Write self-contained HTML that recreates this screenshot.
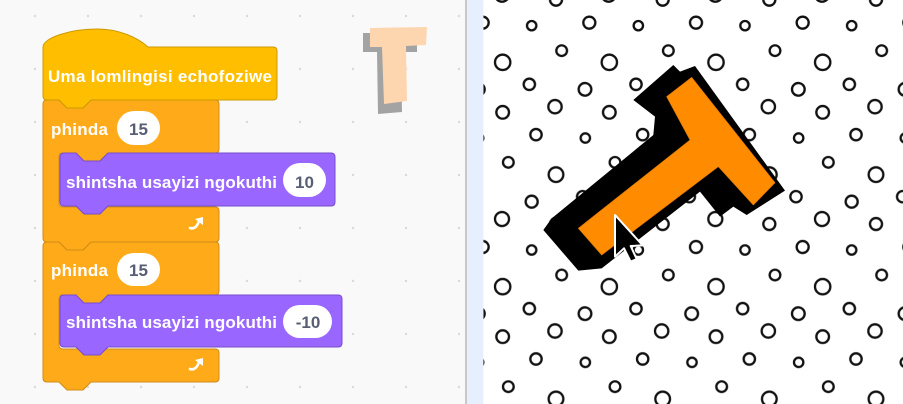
<!DOCTYPE html>
<html><head><meta charset="utf-8"><style>
html,body{margin:0;padding:0;width:903px;height:404px;overflow:hidden;background:#f9f9f9}
svg{position:absolute;left:0;top:0}
</style></head><body>
<svg width="903" height="404" viewBox="0 0 903 404" xmlns="http://www.w3.org/2000/svg">
<defs>
<pattern id="dots" x="0" y="0" width="53" height="53" patternUnits="userSpaceOnUse">
<circle cx="35" cy="16" r="1.2" fill="#d9d9d9"/>
</pattern>
</defs>
<rect x="0" y="0" width="466" height="404" fill="#f9f9f9"/>
<rect x="0" y="0" width="466" height="404" fill="url(#dots)"/>
<rect x="465" y="0" width="2" height="404" fill="#c8c8c8"/>
<rect x="467" y="0" width="16" height="404" fill="#e5effe"/>
<rect x="482" y="0" width="1" height="404" fill="#c9d6ea"/>

<!-- peach T sprite icon -->
<path d="M363,33 L417,33 L417,52 L401,52 L402,112 L378,114 L377,52 L363,52 Z" fill="#a3a3a3"/>
<path d="M370,28 L427,27 L426,45 L406,46 L407,101 L384,104 L382,47 L370,47 Z" fill="#fdd6b0"/>

<g font-family="Liberation Sans, Arial, sans-serif" font-weight="bold" font-size="17">
<!-- repeat 2 -->
<path d="M43,246 Q43,242 47,242 L59,242 L67,250 L83,250 L91,242 L215,242 Q219,242 219,246 L219,291 Q219,295 215,295 L108,295 L100,303 L84,303 L76,295 L63,295 Q59,295 59,299 L59,345 Q59,349 63,349 L215,349 Q219,349 219,353 L219,378 Q219,382 215,382 L91,382 L83,390 L67,390 L59,382 L47,382 Q43,382 43,378 Z" fill="#ffab19" stroke="#cf8b17" stroke-width="1"/>
<path d="M60,299 Q60,295 64,295 L76,295 L84,303 L100,303 L108,295 L338,295 Q342,295 342,299 L342,343 Q342,347 338,347 L108,347 L100,355 L84,355 L76,347 L64,347 Q60,347 60,343 Z" fill="#9966ff" stroke="#774dcb" stroke-width="1"/>
<text x="51" y="276" fill="#fff" textLength="57">phinda</text>
<rect x="117" y="253" width="43" height="33" rx="16.5" fill="#fff"/>
<text x="138.5" y="276" fill="#575e75" text-anchor="middle">15</text>
<text x="66" y="328" fill="#fff" textLength="211">shintsha usayizi ngokuthi</text>
<rect x="283" y="305" width="49" height="33" rx="16.5" fill="#fff"/>
<text x="308" y="328" fill="#575e75" text-anchor="middle">-10</text>
<path d="M190,369 Q196,371 199,362" fill="none" stroke="#fff" stroke-width="2.6" stroke-linecap="round"/>
<path d="M195,360 L203,358 L203,366 Z" fill="#fff"/>

<!-- repeat 1 -->
<path d="M43,104 Q43,100 47,100 L59,100 L67,108 L83,108 L91,100 L215,100 Q219,100 219,104 L219,149 Q219,153 215,153 L108,153 L100,161 L84,161 L76,153 L63,153 Q59,153 59,157 L59,203 Q59,207 63,207 L215,207 Q219,207 219,211 L219,238 Q219,242 215,242 L91,242 L83,250 L67,250 L59,242 L47,242 Q43,242 43,238 Z" fill="#ffab19" stroke="#cf8b17" stroke-width="1"/>
<path d="M60,157 Q60,153 64,153 L76,153 L84,161 L100,161 L108,153 L331,153 Q335,153 335,157 L335,202 Q335,206 331,206 L108,206 L100,214 L84,214 L76,206 L64,206 Q60,206 60,202 Z" fill="#9966ff" stroke="#774dcb" stroke-width="1"/>
<text x="51" y="135" fill="#fff" textLength="57">phinda</text>
<rect x="117" y="111" width="43" height="34" rx="17" fill="#fff"/>
<text x="138.5" y="135" fill="#575e75" text-anchor="middle">15</text>
<text x="66" y="188" fill="#fff" textLength="211">shintsha usayizi ngokuthi</text>
<rect x="283" y="163" width="43" height="34" rx="17" fill="#fff"/>
<text x="304.5" y="188" fill="#575e75" text-anchor="middle">10</text>
<path d="M190,228 Q196,230 199,221" fill="none" stroke="#fff" stroke-width="2.6" stroke-linecap="round"/>
<path d="M195,219 L203,217 L203,225 Z" fill="#fff"/>

<!-- hat -->
<path d="M43,47 C43,38 70,29 97,29 C120,29 138,38 148,47 L273,47 Q277,47 277,51 L277,96 Q277,100 273,100 L91,100 L83,108 L67,108 L59,100 L47,100 Q43,100 43,96 Z" fill="#ffbf00" stroke="#cc9900" stroke-width="1"/>
<text x="48" y="82" fill="#fff" textLength="224">Uma lomlingisi echofoziwe</text>
</g>
</svg>

<svg style="left:480px" width="423" height="404" viewBox="0 0 1269 1212" xmlns="http://www.w3.org/2000/svg">
<defs>
<pattern id="circ" x="0" y="0" width="320" height="673" patternUnits="userSpaceOnUse">
<g fill="none" stroke="#111" stroke-width="7">
<circle cx="68" cy="187" r="23"/>
<circle cx="245" cy="152" r="16"/>
<circle cx="148" cy="253" r="17"/>
<circle cx="315" cy="268" r="19"/><circle cx="-5" cy="268" r="19"/>
<circle cx="68" cy="337" r="19"/>
<circle cx="225" cy="320" r="20"/>
<circle cx="168" cy="404" r="17"/>
<circle cx="316" cy="414" r="14"/><circle cx="-4" cy="414" r="14"/>
<circle cx="85" cy="487" r="16"/>
<circle cx="228" cy="524" r="22"/>
<circle cx="155" cy="605" r="18"/>
<circle cx="66" cy="657" r="21"/><circle cx="66" cy="-16" r="21"/>
<circle cx="308" cy="590" r="17"/><circle cx="-12" cy="590" r="17"/>
<circle cx="228" cy="672" r="18"/><circle cx="228" cy="-1" r="18"/>
<circle cx="155" cy="77" r="14"/>
<circle cx="8" cy="68" r="18"/><circle cx="328" cy="68" r="18"/>
</g>
</pattern>
</defs>
<rect x="0" y="0" width="1269" height="1212" fill="#fff"/>
<rect x="10" y="0" width="1259" height="1212" fill="url(#circ)"/>
<rect x="0" y="0" width="10" height="1212" fill="#e5effe"/>
<path d="M460,300 L580,195 L600,215 L645,198 L915,572 L800,645 L760,620 L720,650 L660,575 L365,805 L295,812 L190,690 L215,655 L520,405 L525,350 Z" fill="#000"/>
<path d="M560,290 L635,232 L885,548 L820,615 L715,500 L365,765 L295,685 L630,420 Z" fill="#ff8c00" stroke="#e07800" stroke-width="2"/>
<path d="M405,645 L405,770 L432,745 L452,785 L470,777 L452,738 L488,736 Z" fill="#000" stroke="#fff" stroke-width="6" stroke-linejoin="round"/>
</svg>
</body></html>
